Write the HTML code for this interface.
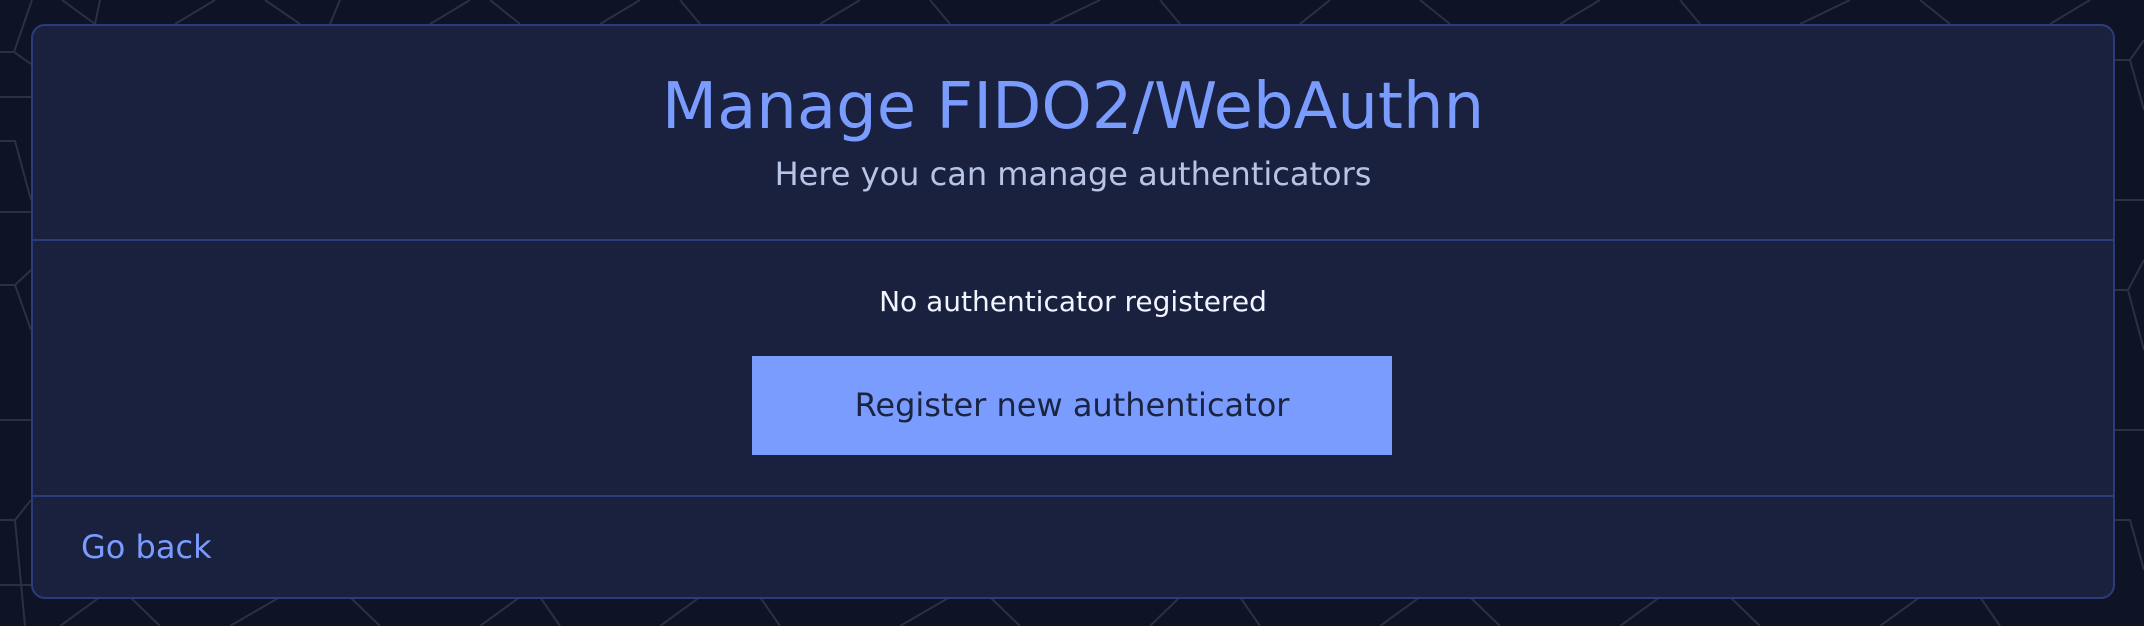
<!DOCTYPE html>
<html><head><meta charset="utf-8">
<style>
html,body{margin:0;padding:0;width:2144px;height:626px;overflow:hidden;background:#0e1326;font-family:"DejaVu Sans","Liberation Sans",sans-serif;}
svg.bg{position:absolute;left:0;top:0}
.card{position:absolute;left:31px;top:24px;width:2080px;height:571px;background:#19213f;border:2px solid #2a3d7a;border-radius:14px;}
.t{position:absolute;left:0;width:100%;text-align:center;white-space:nowrap;line-height:1}
.h1{top:49px;font-size:64px;color:#7b9cff}
.sub{top:132px;font-size:32px;color:#b8c4e6}
.hr{position:absolute;left:0;width:100%;height:2px;background:#2a3d7a}
.msg{top:262px;font-size:28px;color:#f2f5ff}
.btn{position:absolute;left:719px;top:330px;width:640px;height:99px;background:#7b9cff;color:#1a2340;font-size:32px;text-align:center;line-height:99px}
.back{position:absolute;left:48px;top:505px;font-size:32px;color:#7b9cff;line-height:1}
</style></head><body>
<svg class="bg" width="2144" height="626" viewBox="0 0 2144 626">
<g stroke="#2b3042" stroke-width="2" fill="none">
<path d="M0 52 L14 52 L32 0 M14 52 L31 64 M0 97 L31 97 M0 141 L15 141 L31 200 M0 212 L31 212 M0 285 L15 285 L31 270 M15 285 L31 330 M0 420 L31 420 M0 520 L15 520 L31 500 M15 520 L25 626 M0 585 L31 585"/>
<path d="M62 0 L95 24 M95 24 L100 0 M175 24 L215 0 M300 24 L265 0 M330 24 L340 0 M430 24 L470 0 M520 24 L490 0 M600 24 L640 0 M700 24 L680 0 M820 24 L860 0 M950 24 L930 0 M1050 24 L1100 0 M1180 24 L1160 0 M1300 24 L1330 0 M1450 24 L1420 0 M1560 24 L1600 0 M1700 24 L1680 0 M1800 24 L1850 0 M1950 24 L1920 0 M2050 24 L2090 0"/>
<path d="M60 626 L100 597 M160 626 L130 597 M230 626 L280 597 M380 626 L350 597 M480 626 L520 597 M560 626 L540 597 M660 626 L700 597 M780 626 L760 597 M900 626 L950 597 M1020 626 L990 597 M1150 626 L1180 597 M1260 626 L1240 597 M1380 626 L1420 597 M1500 626 L1470 597 M1620 626 L1660 597 M1760 626 L1730 597 M1880 626 L1920 597 M2000 626 L1980 597"/>
<path d="M2113 60 L2130 60 L2144 40 M2130 60 L2144 110 M2113 200 L2144 200 M2113 290 L2128 290 L2144 260 M2128 290 L2144 350 M2113 430 L2144 430 M2113 520 L2130 520 L2144 570"/>
</g></svg>
<div class="card">
<div class="t h1">Manage FIDO2/WebAuthn</div>
<div class="t sub">Here you can manage authenticators</div>
<div class="hr" style="top:213px"></div>
<div class="t msg">No authenticator registered</div>
<div class="btn">Register new authenticator</div>
<div class="hr" style="top:469px"></div>
<div class="back">Go back</div>
</div>
</body></html>
